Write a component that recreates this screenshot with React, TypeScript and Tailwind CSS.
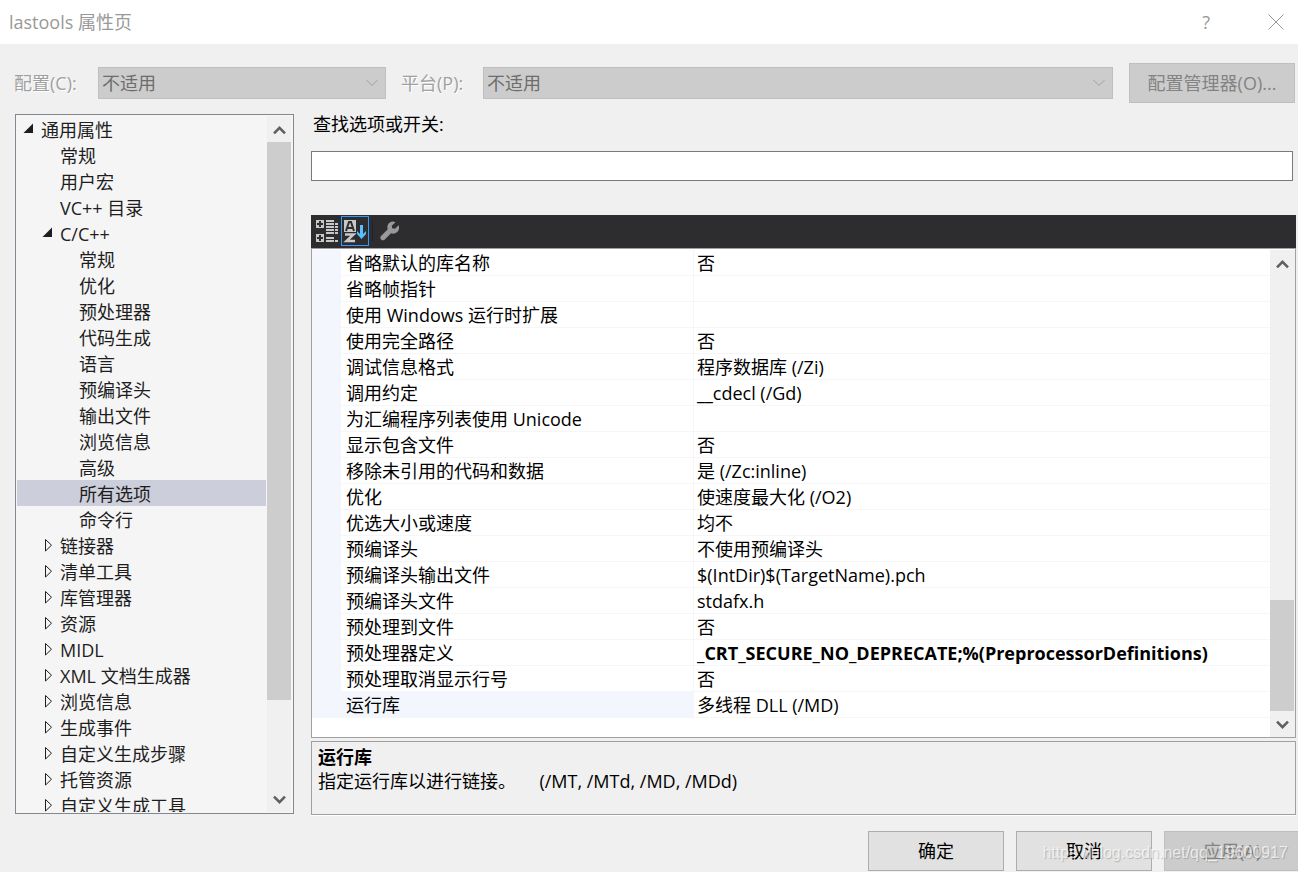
import { useState } from 'react';
import type { ReactNode } from 'react';

type TreeItem = { id: string; label: string; open?: boolean; children?: TreeItem[] };

type Option = { name: string; value?: string; modified?: boolean };

const leaves = (parent: string, labels: string[]): TreeItem[] =>
  labels.map((label) => ({ id: `${parent}/${label}`, label }));

const collapsed = (label: string): TreeItem => ({
  id: label,
  label,
  open: false,
  children: [],
});

const tree: TreeItem[] = [
  {
    id: 'root',
    label: '通用属性',
    open: true,
    children: [
      ...leaves('root', ['常规', '用户宏', 'VC++ 目录']),
      {
        id: 'cpp',
        label: 'C/C++',
        open: true,
        children: leaves('cpp', [
          '常规',
          '优化',
          '预处理器',
          '代码生成',
          '语言',
          '预编译头',
          '输出文件',
          '浏览信息',
          '高级',
          '所有选项',
          '命令行',
        ]),
      },
      collapsed('链接器'),
      collapsed('清单工具'),
      collapsed('库管理器'),
      collapsed('资源'),
      collapsed('MIDL'),
      collapsed('XML 文档生成器'),
      collapsed('浏览信息'),
      collapsed('生成事件'),
      collapsed('自定义生成步骤'),
      collapsed('托管资源'),
      collapsed('自定义生成工具'),
    ],
  },
];

const options: Option[] = [
  { name: '省略默认的库名称', value: '否' },
  { name: '省略帧指针' },
  { name: '使用 Windows 运行时扩展' },
  { name: '使用完全路径', value: '否' },
  { name: '调试信息格式', value: '程序数据库 (/Zi)' },
  { name: '调用约定', value: '__cdecl (/Gd)' },
  { name: '为汇编程序列表使用 Unicode' },
  { name: '显示包含文件', value: '否' },
  { name: '移除未引用的代码和数据', value: '是 (/Zc:inline)' },
  { name: '优化', value: '使速度最大化 (/O2)' },
  { name: '优选大小或速度', value: '均不' },
  { name: '预编译头', value: '不使用预编译头' },
  { name: '预编译头输出文件', value: '$(IntDir)$(TargetName).pch' },
  { name: '预编译头文件', value: 'stdafx.h' },
  { name: '预处理到文件', value: '否' },
  {
    name: '预处理器定义',
    value: '_CRT_SECURE_NO_DEPRECATE;%(PreprocessorDefinitions)',
    modified: true,
  },
  { name: '预处理取消显示行号', value: '否' },
  { name: '运行库', value: '多线程 DLL (/MD)' },
];

const indent = ['pl-[6px]', 'pl-[25px]', 'pl-[44px]'];

const Arrow = ({ open }: { open?: boolean }) => (
  <svg width="18" height="26" viewBox="0 0 18 26" aria-hidden="true">
    {open ? (
      <path d="M10 7.500V17H0.500Z" fill="#1e1e1e" />
    ) : (
      <path d="M3.500 7.500V19L9.500 13.200Z" fill="none" stroke="#1e1e1e" />
    )}
  </svg>
);

const TreeList = ({
  items,
  depth = 0,
  selected,
  onSelect,
}: {
  items: TreeItem[];
  depth?: number;
  selected: string;
  onSelect: (id: string) => void;
}) => (
  <ul>
    {items.map((item) => (
      <li key={item.id}>
        <button
          type="button"
          onClick={() => onSelect(item.id)}
          className={`flex h-[26px] w-full items-center whitespace-nowrap text-left text-[#1e1e1e] ${
            indent[depth]
          } ${selected === item.id ? 'bg-[#cccedb]' : ''}`}
        >
          <span className="w-[18px] shrink-0">
            {item.children ? <Arrow open={item.open} /> : null}
          </span>
          <span className="pt-[2px]">{item.label}</span>
        </button>
        {item.open && item.children ? (
          <TreeList
            items={item.children}
            depth={depth + 1}
            selected={selected}
            onSelect={onSelect}
          />
        ) : null}
      </li>
    ))}
  </ul>
);

const ScrollButton = ({ up, label }: { up?: boolean; label: string }) => (
  <button
    type="button"
    aria-label={label}
    className="flex h-[26px] shrink-0 items-center justify-center pl-px pt-[2px]"
  >
    <svg width="13" height="10" viewBox="0 0 13 10" aria-hidden="true">
      <path
        d={up ? 'M1 8.300L6.500 2.800L12 8.300' : 'M1 1.700L6.500 7.200L12 1.700'}
        fill="none"
        stroke="#606060"
        strokeWidth="2.6"
      />
    </svg>
  </button>
);

const ScrollBar = ({ children }: { children: ReactNode }) => (
  <div className="flex w-6 shrink-0 flex-col bg-[#f0f0f0]">
    <ScrollButton up label="向上滚动" />
    <div className="flex flex-1 flex-col">{children}</div>
    <ScrollButton label="向下滚动" />
  </div>
);

const DisabledSelect = ({ id, className }: { id: string; className: string }) => (
  <div className={`relative h-8 ${className}`}>
    <select
      id={id}
      disabled
      className="h-full w-full appearance-none border border-[#bfbfbf] bg-[#cccccc] pl-[3px] text-[#6d6d6d] opacity-100"
    >
      <option>不适用</option>
    </select>
    <svg
      className="pointer-events-none absolute right-2 top-3"
      width="12"
      height="8"
      viewBox="0 0 12 8"
      aria-hidden="true"
    >
      <path d="M0.5 1L6 6.5L11.5 1" fill="none" stroke="#a0a0a0" />
    </svg>
  </div>
);

const CategorizedIcon = () => (
  <svg width="22" height="22" viewBox="0 0 22 22" aria-hidden="true">
    <g fill="#c8c8c8">
      <path d="M0 0h8v8H0zM0 14h8v8H0z" />
      <path d="M10 0h8v2h-8zM10 3h8v2h-8zM10 6h8v2h-8zM10 9h8v2h-8zM10 12h8v2h-8zM10 17h8v2h-8zM10 20h8v2h-8z" />
      <path d="M19 3h3v2h-3zM19 6h3v2h-3zM19 9h3v2h-3zM19 12h3v2h-3zM19 20h3v2h-3z" />
    </g>
    <path
      d="M3 1h2v2h2v2H5v2H3V5H1V3h2zM3 15h2v2h2v2H5v2H3v-2H1v-2h2z"
      fill="#2d2d30"
    />
  </svg>
);

const SortIcon = () => (
  <svg width="24" height="24" viewBox="0 0 24 24" aria-hidden="true">
    <path d="M1 1h12v12H1z" fill="#c8c8c8" />
    <path d="M3 12L6 3h2l3 9M4.5 9h5" fill="none" stroke="#2d2d30" strokeWidth="2" />
    <path d="M2 15.500H10.500L3.500 22H12" fill="none" stroke="#c8c8c8" strokeWidth="2.500" />
    <path d="M17 6h3v9l3-3v3l-4.500 5L14 15v-3l3 3z" fill="#55c1ff" />
  </svg>
);

const WrenchIcon = () => (
  <svg width="20" height="20" viewBox="0 0 20 20" aria-hidden="true">
    <path
      d="M15.500 1.200C12.500 -0.200 9 1 7.800 4C7.200 5.500 7.300 7 7.800 8.300L1 15C-1 17.500 2 20.600 4.600 18.800L11 12.300C14.500 13.500 18.500 11.500 19 7.500C19.200 6.200 19 5 18.500 4.200L15 7.800L12.200 7.300L11.800 4.800Z"
      fill="#999999"
    />
  </svg>
);

const dialogButton =
  'h-10 w-[136px] shrink-0 border border-[#adadad] bg-[#e1e1e1] text-black';

const App = () => {
  const [selected, setSelected] = useState('cpp/所有选项');
  const [search, setSearch] = useState('');

  return (
    <div className="relative flex h-screen flex-col overflow-hidden bg-[#f0f0f0] font-['Open_Sans','Noto_Sans_CJK_SC',sans-serif] text-[18px] leading-[26px] text-black">
      <header className="flex h-11 shrink-0 items-center bg-white pb-px pl-[9px] pr-[14px] text-[#999999]">
        <h1 className="flex-1">lastools 属性页</h1>
        <button type="button" aria-label="帮助" className="mr-[58px]">
          ?
        </button>
        <button type="button" aria-label="关闭">
          <svg width="16" height="16" viewBox="0 0 16 16" aria-hidden="true">
            <path d="M0.500 0.500L15.500 15.500M15.500 0.500L0.500 15.500" stroke="#999999" />
          </svg>
        </button>
      </header>

      <div className="flex shrink-0 items-center pb-[11px] pl-[14px] pr-[3px] pt-[19px]">
        <label
          htmlFor="configuration"
          className="w-[84px] shrink-0 text-[#a0a0a0] [text-shadow:1px_1px_0_#fff]"
        >
          配置(C):
        </label>
        <DisabledSelect id="configuration" className="w-[288px] shrink-0" />
        <label
          htmlFor="platform"
          className="ml-[15px] w-[82px] shrink-0 text-[#a0a0a0] [text-shadow:1px_1px_0_#fff]"
        >
          平台(P):
        </label>
        <DisabledSelect id="platform" className="min-w-0 flex-1" />
        <button
          type="button"
          disabled
          className="ml-4 h-10 w-[166px] shrink-0 border border-[#bfbfbf] bg-[#cccccc] text-[#838383]"
        >
          配置管理器(O)...
        </button>
      </div>

      <main className="flex min-h-0 flex-1 pl-[15px] pr-[2px]">
        <nav className="mb-px flex w-[279px] shrink-0 border border-[#828790] bg-[#f5f5f5] p-px">
          <div className="mr-px min-w-0 flex-1 overflow-hidden">
            <TreeList items={tree} selected={selected} onSelect={setSelected} />
          </div>
          <ScrollBar>
            <div className="flex-[558] bg-[#cdcdcd]" />
            <div className="flex-[86]" />
          </ScrollBar>
          <div className="w-px" />
        </nav>

        <section className="ml-[17px] flex min-w-0 flex-1 flex-col">
          <label htmlFor="search" className="-mt-[3px] pl-[2px]">
            查找选项或开关:
          </label>
          <input
            id="search"
            value={search}
            onChange={(e) => setSearch(e.target.value)}
            className="mr-[3px] mt-[14px] h-[30px] shrink-0 border border-[#7a7a7a] bg-white px-1 outline-none"
          />

          <div className="mt-[34px] flex h-[33px] shrink-0 items-center bg-[#2d2d30] pb-px">
            <button type="button" aria-label="按分类顺序" className="pl-[5px]">
              <CategorizedIcon />
            </button>
            <button
              type="button"
              aria-label="字母顺序"
              className="ml-[3px] flex h-[30px] w-7 items-center justify-center border border-[#3399ff]"
            >
              <SortIcon />
            </button>
            <button
              type="button"
              aria-label="属性页"
              className="ml-[3px] border-l border-[#222222] pl-[7px]"
            >
              <WrenchIcon />
            </button>
          </div>

          <div className="flex min-h-0 flex-1 border border-[#a0a0a0] bg-white pt-px">
            <div className="min-w-0 flex-1 overflow-hidden">
              <table className="w-full table-fixed border-separate border-spacing-0 text-left">
                <colgroup>
                  <col className="w-[29px]" />
                  <col className="w-[353px]" />
                  <col />
                </colgroup>
                <tbody>
                  {options.map((option) => (
                    <tr key={option.name} className="whitespace-nowrap">
                      <td className="bg-[#f3f7fd] p-0" />
                      <th
                        scope="row"
                        className={`h-[26px] border-b border-r pb-0 pl-[5px] pr-0 pt-[2px] font-normal leading-[23px] ${
                          option.name === '运行库'
                            ? 'border-[#f3f7fd] bg-[#f3f7fd]'
                            : 'border-[#f6f6f8]'
                        }`}
                      >
                        {option.name}
                      </th>
                      <td
                        className={`h-[26px] border-b border-[#f6f6f8] pb-0 pl-[3px] pr-0 pt-[2px] leading-[23px] ${
                          option.modified ? 'font-bold' : ''
                        }`}
                      >
                        {option.value}
                      </td>
                    </tr>
                  ))}
                </tbody>
              </table>
            </div>
            <ScrollBar>
              <div className="flex-[325]" />
              <div className="flex-[111] bg-[#cdcdcd]" />
            </ScrollBar>
            <div className="w-px bg-[#f0f0f0]" />
          </div>

          <div className="mt-[3px] h-[74px] shrink-0 border border-[#a0a0a0] pl-[6px] pt-[3px] leading-6 shadow-[0_1px_0_#fff]">
            <h2 className="font-bold">运行库</h2>
            <p className="whitespace-pre">
              指定运行库以进行链接。     (/MT, /MTd, /MD, /MDd)
            </p>
          </div>
        </section>
      </main>

      <footer className="-mr-[2px] flex shrink-0 justify-end gap-3 pb-px pt-4">
        <button type="button" className={dialogButton}>
          确定
        </button>
        <button type="button" className={dialogButton}>
          取消
        </button>
        <button
          type="button"
          disabled
          className="h-10 w-[136px] shrink-0 border border-[#bfbfbf] bg-[#cccccc] text-[#838383]"
        >
          应用(A)
        </button>
      </footer>

      <span className="pointer-events-none absolute bottom-[7px] right-[10px] font-['Liberation_Sans',Arial,sans-serif] text-base text-white/70 [text-shadow:1px_1px_1px_rgba(0,0,0,0.2)]">
        https://blog.csdn.net/qq_19600917
      </span>
    </div>
  );
};

export default App;
